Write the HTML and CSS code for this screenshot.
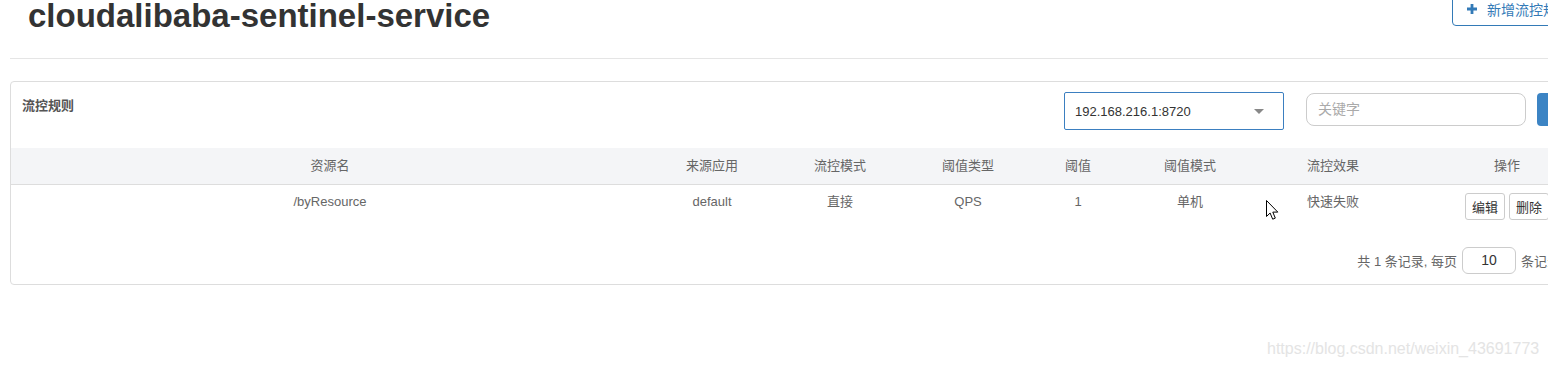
FILE: index.html
```html
<!DOCTYPE html>
<html lang="zh-CN">
<head>
<meta charset="utf-8">
<title>流控规则</title>
<link rel="stylesheet" href="styles.css">
</head>
<body>
<div class="page">
  <div class="header">
    <h1 class="title">cloudalibaba-sentinel-service</h1>
    <button class="btn-add"><svg class="plus" viewBox="0 0 10 10" width="10" height="10"><path d="M3.6 0h2.8v3.6H10v2.8H6.4V10H3.6V6.4H0V3.6h3.6z" fill="#337ab7"/></svg><span>新增流控规则</span></button>
  </div>
  <div class="rule"></div>
  <div class="panel">
    <div class="panel-head">
      <div class="panel-title">流控规则</div>
      <div class="select"><span>192.168.216.1:8720</span><span class="caret"></span></div>
      <div class="search">关键字</div>
      <button class="btn-search"></button>
    </div>
    <div class="table">
      <div class="thead">
        <div>资源名</div><div>来源应用</div><div>流控模式</div><div>阈值类型</div><div>阈值</div><div>阈值模式</div><div>流控效果</div><div>操作</div>
      </div>
      <div class="trow">
        <div>/byResource</div><div>default</div><div>直接</div><div>QPS</div><div>1</div><div>单机</div><div>快速失败</div>
        <div class="ops"><button class="btn-op">编辑</button><button class="btn-op">删除</button></div>
      </div>
    </div>
    <div class="pager">
      <span>共 1 条记录, 每页</span>
      <span class="page-size">10</span>
      <span>条记录</span>
    </div>
  </div>
</div>
<svg class="cursor" width="13" height="22" viewBox="0 0 13 22"><path d="M0.5 0.5v16l3.6-3.5 2.6 6.2 2.6-1.1-2.5-6h5z" fill="#fff" stroke="#000" stroke-width="1"/></svg>
<div class="watermark">https://blog.csdn.net/weixin_43691773</div>
</body>
</html>
```
FILE: styles.css
```css
html, body {
  margin: 0;
  padding: 0;
  background: #fff;
  overflow: hidden;
  height: 367px;
}
body {
  font-family: "Liberation Sans", Arial, "Noto Sans CJK SC", sans-serif;
  color: #333;
  position: relative;
}
.page {
  width: 1594px;
  padding-left: 10px;
}
.header {
  display: flex;
  justify-content: space-between;
  align-items: flex-start;
  padding-left: 18px;
}
.title {
  margin: 0;
  font-size: 33px;
  line-height: 31px;
  font-weight: bold;
  color: #333;
}
.btn-add {
  margin-top: -8px;
  width: 160px;
  height: 34px;
  border: 1px solid #337ab7;
  border-radius: 4px;
  background: #fff;
  color: #337ab7;
  font-family: "Liberation Sans", "Noto Sans CJK SC", sans-serif;
  font-size: 14px;
  display: flex;
  align-items: center;
  padding: 0 0 0 14px;
  margin-right: -8px;
}
.btn-add .plus {
  margin-right: 10px;
}
.rule {
  margin-top: 27px;
  border-top: 1px solid #e5e5e5;
  width: 1600px;
}
.panel {
  margin-top: 22px;
  border: 1px solid #ddd;
  border-radius: 4px;
  width: 1592px;
}
.panel-head {
  display: flex;
  align-items: flex-start;
  height: 66px;
  padding: 10px 12px 0 11px;
  box-sizing: border-box;
}
.panel-title {
  flex: 1;
  font-size: 13px;
  font-weight: bold;
  color: #555;
  line-height: 18px;
  margin-top: 5px;
}
.select {
  width: 220px;
  height: 38px;
  box-sizing: border-box;
  border: 1px solid #3b7fc0;
  border-radius: 2px;
  display: flex;
  align-items: center;
  justify-content: space-between;
  padding: 0 19px 0 10px;
  font-size: 13px;
  color: #333;
}
.caret {
  width: 0;
  height: 0;
  border-left: 5px solid transparent;
  border-right: 5px solid transparent;
  border-top: 5px solid #888;
}
.search {
  margin-left: 22px;
  margin-top: 1px;
  width: 220px;
  height: 33px;
  box-sizing: border-box;
  border: 1px solid #ccc;
  border-radius: 8px;
  padding: 0 11px;
  line-height: 31px;
  font-size: 14px;
  color: #aaa;
}
.btn-search {
  margin-left: 11px;
  margin-top: 1px;
  width: 54px;
  height: 33px;
  border: 0;
  border-radius: 4px;
  background: #3c84c4;
}
.table {
  font-size: 13px;
  color: #666;
}
.thead, .trow {
  display: grid;
  grid-template-columns: 638px 126px 130px 126px 94px 130px 156px 192px;
  text-align: center;
}
.thead {
  height: 36px;
  line-height: 36px;
  background: #f4f5f7;
  border-bottom: 1px solid #ddd;
}
.trow {
  height: 43px;
  line-height: 18px;
  padding-top: 8px;
  box-sizing: border-box;
}
.ops {
  padding-top: 0;
}
.btn-op {
  width: 40px;
  height: 27px;
  padding: 0;
  margin: 0 2px;
  border: 1px solid #ccc;
  border-radius: 3px;
  background: #fff;
  font-family: "Liberation Sans", "Noto Sans CJK SC", sans-serif;
  font-size: 13px;
  color: #333;
}
.pager {
  display: flex;
  justify-content: flex-end;
  align-items: center;
  gap: 5px;
  padding: 19px 43px 10px 0;
  font-size: 13px;
  color: #666;
}
.page-size {
  width: 54px;
  height: 27px;
  box-sizing: border-box;
  border: 1px solid #ccc;
  border-radius: 6px;
  text-align: center;
  line-height: 25px;
  font-size: 14px;
  color: #333;
}
.cursor {
  position: absolute;
  left: 1266px;
  top: 200px;
}
.watermark {
  position: absolute;
  left: 1267px;
  top: 340px;
  font-size: 16px;
  line-height: 18px;
  color: #e4e4e4;
}
```
